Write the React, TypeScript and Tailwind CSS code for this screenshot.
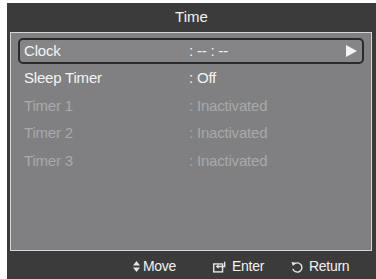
import React from 'react';

const rows = [
  { label: 'Clock', value: ': -- : --', active: true, selected: true },
  { label: 'Sleep Timer', value: ': Off', active: true, selected: false },
  { label: 'Timer 1', value: ': Inactivated', active: false, selected: false },
  { label: 'Timer 2', value: ': Inactivated', active: false, selected: false },
  { label: 'Timer 3', value: ': Inactivated', active: false, selected: false },
];

export default function App() {
  return (
    <div className="w-[376px] h-[279px] bg-white overflow-hidden font-['Liberation_Sans',Arial,sans-serif]">
      <div className="ml-[7px] mt-[3px] w-[369px] h-[276px] bg-[#3b3b3b] flex flex-col">
        {/* title bar */}
        <div className="h-[29px] flex items-center justify-center text-[15px] text-[#f2f2f2]">Time</div>

        {/* menu panel */}
        <div className="ml-[3px] w-[362px] h-[219px] bg-[#808083] border border-[#d6d6d6] pt-[5px] px-[7px]">
          {rows.map((r) => (
            <div
              key={r.label}
              className={
                r.selected
                  ? 'h-[26px] mb-[1.5px] flex items-center rounded-[5px] border-2 border-[#2a2a2a] bg-[#858588] pl-[4px] pr-[4px]'
                  : 'h-[26px] mb-[1.5px] flex items-center pl-[6px] pr-[6px]'
              }
            >
              <span
                className={
                  r.active
                    ? 'w-[165px] text-[15px] text-[#f4f4f4] tracking-[-0.2px]'
                    : 'w-[165px] text-[15px] text-[#a9a9ab] tracking-[-0.2px]'
                }
              >
                {r.label}
              </span>
              <span
                className={
                  r.active
                    ? 'flex-1 text-[15px] text-[#f4f4f4] tracking-[-0.2px]'
                    : 'flex-1 text-[15px] text-[#a9a9ab] tracking-[-0.2px]'
                }
              >
                {r.value}
              </span>
              {r.selected && (
                <svg width="11" height="12" viewBox="0 0 11 12" className="mr-[1px]">
                  <polygon points="0,0 11,6 0,12" fill="#f4f4f4" />
                </svg>
              )}
            </div>
          ))}
        </div>

        {/* footer hints */}
        <div className="flex-1 flex items-center pt-[3px] text-[14px] text-[#f2f2f2] tracking-[-0.3px] pl-[126px]">
          <div className="flex items-center">
            <svg width="7" height="11" viewBox="0 0 7 11" className="mr-[3px]">
              <polygon points="3.5,0 7,4.5 0,4.5" fill="#e6e6e6" />
              <polygon points="0,6.5 7,6.5 3.5,11" fill="#e6e6e6" />
            </svg>
            <span>Move</span>
          </div>
          <div className="flex items-center ml-[37px]">
            <svg width="14" height="12" viewBox="0 0 15 12" className="mr-[5px]">
              <rect x="0.75" y="2.75" width="9.5" height="8.5" fill="none" stroke="#e6e6e6" strokeWidth="1.5" />
              <path d="M12.5 0.5 V5.5 H4" fill="none" stroke="#e6e6e6" strokeWidth="1.5" />
              <polygon points="3,5.5 6,3 6,8" fill="#e6e6e6" />
            </svg>
            <span>Enter</span>
          </div>
          <div className="flex items-center ml-[27px]">
            <svg width="12" height="12" viewBox="0 0 13 12" className="mr-[6px]">
              <path d="M3.2 3 A5 5 0 1 1 2 8" fill="none" stroke="#e6e6e6" strokeWidth="1.5" />
              <polygon points="0.5,0.5 5.5,1.5 2,5" fill="#e6e6e6" />
            </svg>
            <span>Return</span>
          </div>
        </div>
      </div>
    </div>
  );
}
